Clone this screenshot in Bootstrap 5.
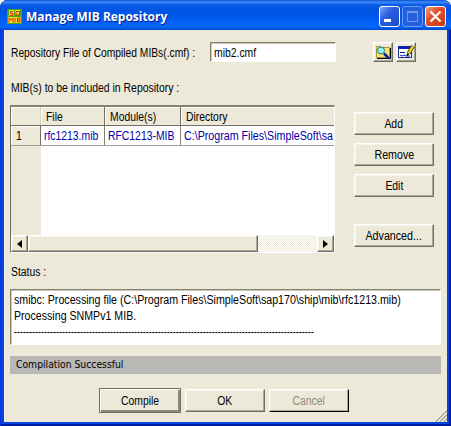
<!DOCTYPE html>
<html lang="en">
<head>
<meta charset="utf-8">
<title>Manage MIB Repository</title>
<link href="https://cdn.jsdelivr.net/npm/bootstrap@5.3.0/dist/css/bootstrap.min.css" rel="stylesheet">
<style>
body{background:#f4f6f8;font:12px/16px "Liberation Sans",Arial,sans-serif;color:#000;overflow:hidden}
.win{width:451px;height:426px;padding:0 4px 4px;border-radius:8px 8px 0 0;background:#0646e0;box-shadow:inset 1px 0 #0831d9,inset -2px -2px #001ea0}
.titlebar{height:30px;margin:0 -4px;padding:2px 5px 0 7px;border-radius:8px 8px 0 0;background:linear-gradient(#0a4fd0 0,#3c8cf8 7%,#0a5ce8 16%,#0054e3 35%,#0058ee 60%,#0565fd 85%,#0461f5 92%,#0044c8 100%)}
.caption{font:bold 13px/18px "Open Sans","Noto Sans",sans-serif;color:#fff;text-shadow:1px 1px #0a1883;margin-left:4px}
.t{display:inline-block;white-space:pre;transform:scaleX(var(--sx,.865));transform-origin:0 50%}
.caption.t{--sx:.92}
.tA{--sx:.855}
.tB{--sx:.87}
.tC{--sx:.888}
.tD{--sx:.885}
.tE{--sx:.75}
.tF{--sx:.89}
.tG{--sx:.935}
.face{background:#ece9d8}
.client{height:392px;padding:0 6px;box-shadow:inset 1px 0 #f6f3e6}
.cap-btn{width:21px;height:21px;border:1px solid #fff;border-radius:3px;background:linear-gradient(135deg,#7ba4f4,#2a5fe0 40%,#1c49c8)}
.cap-btn.off{border-color:#6f9af0;background:#2360dc}
.cap-btn.x{background:linear-gradient(135deg,#f0a184,#e0502c 40%,#c83a14)}
.cap-btn svg,.tool svg{display:block}
.sunk{background:#fff;border:1px solid;border-color:#85826f #fff #fff #85826f;box-shadow:inset 1px 1px #c9c6b6}
.push{background:#ece9d8;border:1px solid;border-color:#fff #716f64 #716f64 #fff;box-shadow:inset -1px -1px #aca899,inset 1px 1px #f6f4ea;border-radius:0;padding:0;font:inherit;color:#000;display:flex;align-items:center;justify-content:center;width:80px;height:23px}
.push .t{transform-origin:50% 50%}
.push.main{width:82px;height:25px;border-color:#716f64;box-shadow:inset 1px 1px #fff,inset -2px -2px #8d8a7c}
.push.off{color:#8c897b;border-color:#fff #000 #000 #fff}
.tool{width:20px;height:20px}
.gridbox{width:325px;height:148px;border:1px solid;border-color:#85826f #fff #fff #716f64;border-top-width:2px;background:#fff;overflow:hidden}
.hd{height:19px;border-bottom:1px solid #716f64}
.hd>div{background:#ece9d8;border-right:1px solid #716f64;box-shadow:inset 1px 1px #fff;padding:2px 0 0 5px}
.c0,.c1,.c2{flex:none}
.c0{width:30px}.c1{width:64px}.c2{width:76px}
.hd>.c0{border-right-color:#d4d0c0}
.rw{height:20px;border-bottom:1px solid #a09e93;color:#0000a8}
.rw>div{flex:none;padding:2px 0 0 3px;border-right:1px solid #85826f;height:19px}
.rw>.c0{color:#000;padding-left:5px;box-shadow:inset 1px 1px #fff;border-right-color:#716f64}
.hd>:last-child,.rw>:last-child{border-right:0}
.rest{flex:1 1 0;width:30px}
.sb{height:17px;background:repeating-conic-gradient(#fff 0 25%,#ece9d8 0 50%) 0 0/2px 2px}
.sb .push{width:17px;height:17px}
.sb .thumb{width:230px}
.logbox{width:431px;height:56px;padding:2px 0 0 3px}
.strip{width:431px;height:18px;background:#b8b8b5;padding-left:6px;font:11px/18px "DejaVu Sans Condensed","DejaVu Sans",sans-serif}
.grip{position:absolute;right:0;bottom:0}
</style>
</head>
<body>
<div class="win">
  <div class="titlebar d-flex align-items-center">
    <svg width="15" height="15" viewBox="0 0 15 15"><path fill="#48a818" d="M0 0h15v15H0z"/><path fill="#e8e020" d="M2 1h5v6H2zM8 1h5v5H8zM1 8h13v6H1z"/><path fill="none" stroke="#e03010" d="M6 2.500H3.500v2H6v2H3M9 2.500h3.500v3.500H9zM2 13.500V9l2 2 2-2v4.500M8 9v4.500M10.500 9v4h2.500V9h-2.500M10.500 11h2.500"/></svg>
    <span class="caption t">Manage MIB Repository</span>
    <div class="d-flex ms-auto" style="gap:2px">
      <div class="cap-btn"><svg width="19" height="19"><path fill="#fff" d="M4 12h7v3H4z"/></svg></div>
      <div class="cap-btn off"><svg width="19" height="19"><path fill="none" stroke="#6f9af0" d="M4.500 5v9.500h10V5"/><path stroke="#6f9af0" stroke-width="2" d="M4 5h11"/></svg></div>
      <div class="cap-btn x"><svg width="19" height="19"><path stroke="#fff" stroke-width="2.200" d="M4.500 4.500l10 10M14.500 4.500l-10 10"/></svg></div>
    </div>
  </div>
  <div class="client face position-relative">
    <div class="d-flex align-items-center" style="padding-top:12px">
      <div style="width:200px;padding:2px 0 0 1px"><span class="t tA">Repository File of Compiled MIBs(.cmf) :</span></div>
      <div class="sunk" style="width:126px;height:20px;padding:2px 0 0 3px"><span class="t">mib2.cmf</span></div>
      <div class="d-flex" style="gap:3px;margin-left:37px">
        <div class="push tool"><svg width="18" height="18"><path fill="#f8e468" stroke="#a89838" d="M2.500 14.500v-11h4l1 1h8v10z"/><path fill="none" stroke="#000" d="M16.500 5v10.500H3"/><circle cx="7" cy="7.500" r="3.500" fill="#90f0f4" stroke="#287888"/><path fill="none" stroke="#0820a8" stroke-width="2.500" d="M10 10.500l5 5"/></svg></div>
        <div class="push tool"><svg width="18" height="18"><path fill="#fff" stroke="#182890" d="M1.500 4.500h13v10h-13z"/><path fill="#1020b0" d="M1 3h14v3H1z"/><path stroke="#1020b0" fill="none" d="M3 9.500h5M3 12l2 1 2-1 2 1h4"/><path stroke="#504808" stroke-width="4" d="M16 3l-4.500 7.500"/><path stroke="#f8d820" stroke-width="2.200" d="M16 3l-4.500 7.500"/><path stroke="#000" stroke-width="1.500" d="M11.500 10.500l-1.500 2"/></svg></div>
      </div>
    </div>
    <div style="padding:18px 0 9px 1px;height:43px"><span class="t tB">MIB(s) to be included in Repository :</span></div>
    <div class="d-flex">
      <div class="gridbox d-flex flex-column">
        <div class="hd d-flex"><div class="c0"></div><div class="c1"><span class="t">File</span></div><div class="c2"><span class="t">Module(s)</span></div><div class="flex-fill"><span class="t">Directory</span></div></div>
        <div class="rw d-flex"><div class="c0 face"><span class="t">1</span></div><div class="c1"><span class="t">rfc1213.mib</span></div><div class="c2"><span class="t">RFC1213-MIB</span></div><div><span class="t tF">C:\Program Files\SimpleSoft\sa</span></div></div>
        <div class="rest face"></div>
        <div class="sb d-flex">
          <div class="push"><svg width="5" height="8"><path d="M5 0v8L0 4z"/></svg></div>
          <div class="push thumb"></div>
          <div class="push ms-auto"><svg width="5" height="8"><path d="M0 0v8l5-4z"/></svg></div>
        </div>
      </div>
      <div class="d-flex flex-column" style="gap:8px;margin:7px 0 0 19px">
        <button class="push"><span class="t">Add</span></button>
        <button class="push"><span class="t tF">Remove</span></button>
        <button class="push"><span class="t">Edit</span></button>
        <button class="push" style="margin-top:19px"><span class="t tF">Advanced...</span></button>
      </div>
    </div>
    <div style="padding:11px 0 0 1px;height:36px"><span class="t">Status :</span></div>
    <div class="sunk logbox">
      <div><span class="t tC">smibc: Processing file (C:\Program Files\SimpleSoft\sap170\ship\mib\rfc1213.mib)</span></div>
      <div><span class="t tD">Processing SNMPv1 MIB.</span></div>
      <div><span class="t tE">----------------------------------------------------------------------------------------------------</span></div>
    </div>
    <div class="strip" style="margin-top:11px"><span class="t tG">Compilation Successful</span></div>
    <div class="d-flex align-items-center" style="gap:4px;margin:14px 0 0 89px">
      <button class="push main"><span class="t">Compile</span></button>
      <button class="push"><span class="t">OK</span></button>
      <button class="push off"><span class="t">Cancel</span></button>
    </div>
    <svg class="grip" width="13" height="13"><path stroke="#fff" d="M0 13L13 0M4 13l9-9M8 13l5-5"/><path stroke="#aca899" stroke-width="1.500" d="M1.500 13L13 1.500M5.500 13L13 5.500M9.500 13L13 9.500"/></svg>
  </div>
</div>
<script src="https://cdn.jsdelivr.net/npm/bootstrap@5.3.0/dist/js/bootstrap.bundle.min.js"></script>
</body>
</html>
